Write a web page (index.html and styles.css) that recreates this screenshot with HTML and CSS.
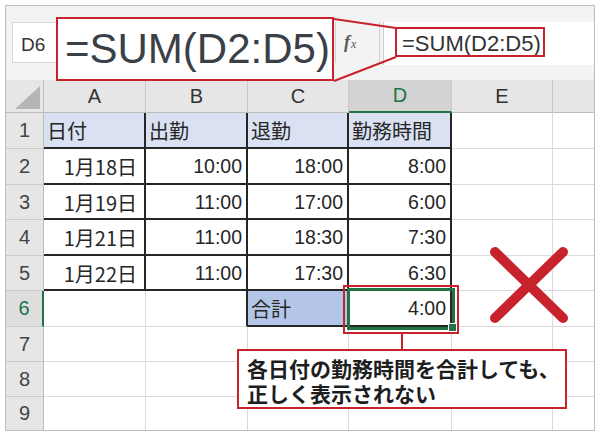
FILE: index.html
```html
<!DOCTYPE html>
<html lang="ja">
<head>
<meta charset="utf-8">
<link rel="stylesheet" href="styles.css">
</head>
<body>
<div class="sheet">
  <div class="fbar">
    <div class="namebox">D6</div>
    <div class="fx"><span class="f">f</span><span class="x">x</span></div>
    <div class="finput">=SUM(D2:D5)</div>
  </div>
  <div class="grid">
    <div class="corner"><svg width="38" height="33" viewBox="0 0 38 33"><polygon points="34,6 34,29 9,29" fill="#b5b5b5"/></svg></div>
    <div class="h">A</div><div class="h">B</div><div class="h">C</div><div class="h sel">D</div><div class="h">E</div><div class="h last"></div>

    <div class="rh">1</div>
    <div class="c t hd">日付</div><div class="c t hd">出勤</div><div class="c t hd">退勤</div><div class="c t hd">勤務時間</div><div class="c"></div><div class="c last"></div>

    <div class="rh">2</div>
    <div class="c t r date">1月18日</div><div class="c t r n">10:00</div><div class="c t r n">18:00</div><div class="c t r n">8:00</div><div class="c"></div><div class="c last"></div>

    <div class="rh">3</div>
    <div class="c t r date">1月19日</div><div class="c t r n">11:00</div><div class="c t r n">17:00</div><div class="c t r n">6:00</div><div class="c"></div><div class="c last"></div>

    <div class="rh">4</div>
    <div class="c t r date">1月21日</div><div class="c t r n">11:00</div><div class="c t r n">18:30</div><div class="c t r n">7:30</div><div class="c"></div><div class="c last"></div>

    <div class="rh">5</div>
    <div class="c t r date">1月22日</div><div class="c t r n">11:00</div><div class="c t r n">17:30</div><div class="c t r n">6:30</div><div class="c"></div><div class="c last"></div>

    <div class="rh sel">6</div>
    <div class="c"></div><div class="c edge"></div><div class="c t sum">合計</div><div class="c t r n">4:00</div><div class="c"></div><div class="c last"></div>

    <div class="rh">7</div>
    <div class="c"></div><div class="c"></div><div class="c"></div><div class="c"></div><div class="c"></div><div class="c last"></div>

    <div class="rh">8</div>
    <div class="c"></div><div class="c"></div><div class="c"></div><div class="c"></div><div class="c"></div><div class="c last"></div>

    <div class="rh end">9</div>
    <div class="c end"></div><div class="c end"></div><div class="c end"></div><div class="c end"></div><div class="c end"></div><div class="c last end"></div>
  </div>

  <div class="zoombox">=SUM(D2:D5)</div>
  <div class="minibox"></div>
  <div class="pick"></div>
  <div class="cursor"><span class="handle"></span></div>
  <svg class="ann" width="588" height="426" viewBox="0 0 588 426">
    <line x1="328" y1="13" x2="390" y2="22" stroke="#c8222c" stroke-width="2"/>
    <line x1="328" y1="75" x2="390" y2="51" stroke="#c8222c" stroke-width="2"/>
    <line x1="396" y1="328" x2="396" y2="344" stroke="#c8222c" stroke-width="2"/>
    <line x1="489" y1="246" x2="557" y2="312" stroke="#c8222c" stroke-width="10" stroke-linecap="round"/>
    <line x1="557" y1="246" x2="489" y2="312" stroke="#c8222c" stroke-width="10" stroke-linecap="round"/>
  </svg>
  <div class="note">各日付の勤務時間を合計しても、<br>正しく表示されない</div>
</div>
</body>
</html>
```

FILE: styles.css
```css
body {
  margin: 0;
  background: #ffffff;
  font-family: "Noto Sans CJK JP", sans-serif;
}

.sheet {
  position: relative;
  margin: 5px 0 0 5px;
  width: 590px;
  border: 1px solid #bdbdbd;
  background: #f3f3f3;
  box-sizing: border-box;
}

.fbar {
  height: 74px;
  display: flex;
  align-items: flex-start;
  padding: 16px 0 0 6px;
  box-sizing: border-box;
}

.namebox {
  width: 100px;
  height: 41px;
  background: #ffffff;
  border: 1px solid #d6d6d6;
  box-sizing: border-box;
  padding: 4px 0 0 8px;
  display: flex;
  align-items: center;
  font-family: "Liberation Sans", sans-serif;
  font-size: 19px;
  color: #333333;
}

.fx {
  margin-left: auto;
  width: 45px;
  height: 41px;
  border-left: 1px solid #d0d0d0;
  border-right: 1px solid #d0d0d0;
  box-sizing: border-box;
  display: flex;
  align-items: center;
  padding-left: 8px;
  font-family: "Liberation Serif", serif;
  font-style: italic;
  color: #5a5a5a;
}

.fx .f {
  font-size: 18px;
  font-weight: 700;
}

.fx .x {
  font-size: 12px;
  margin-left: 1px;
  margin-top: 4px;
}

.finput {
  margin-left: 3px;
  width: 211px;
  height: 43px;
  background: #ffffff;
  border-left: 1px solid #d0d0d0;
  box-sizing: border-box;
  padding-left: 18px;
  display: flex;
  align-items: center;
  font-family: "Liberation Sans", sans-serif;
  font-size: 22px;
  color: #333333;
}

.grid {
  display: grid;
  grid-template-columns: 38px 102px 102px 101px 103px 101px 41px;
  grid-template-rows: 33px 36px 36px 35px 36px 35px 36px 35px 35px 33px;
  background: #ffffff;
}

.corner {
  background: #e6e6e6;
  border-right: 1px solid #bcbcbc;
  border-bottom: 1px solid #bcbcbc;
  box-sizing: border-box;
}

.corner svg {
  display: block;
}

.h {
  background: #e6e6e6;
  border-right: 1px solid #c9c9c9;
  border-bottom: 1px solid #bcbcbc;
  box-sizing: border-box;
  display: flex;
  align-items: center;
  justify-content: center;
  font-family: "Liberation Sans", sans-serif;
  font-size: 20px;
  color: #333333;
}

.h.sel {
  background: #d3d3d3;
  color: #217346;
  border-bottom: 2px solid #217346;
}

.h.last {
  border-right: none;
}

.rh {
  background: #e6e6e6;
  border-right: 1px solid #bcbcbc;
  border-bottom: 1px solid #cacaca;
  box-sizing: border-box;
  display: flex;
  align-items: center;
  justify-content: center;
  font-family: "Liberation Sans", sans-serif;
  font-size: 20px;
  color: #444444;
}

.rh.sel {
  color: #217346;
  background: #dedede;
  border-right: 2px solid #217346;
}

.c {
  border-right: 1px solid #dadada;
  border-bottom: 1px solid #dadada;
  box-sizing: border-box;
  display: flex;
  align-items: center;
  padding: 1px 4px 0 3px;
  font-size: 20px;
  color: #262626;
  white-space: nowrap;
  overflow: hidden;
}

.c.last {
  border-right: none;
}

.end {
  border-bottom: none;
}

.c.r {
  justify-content: flex-end;
}

.c.n {
  font-family: "Liberation Sans", sans-serif;
  font-size: 19.5px;
}

.c.date {
  font-size: 20px;
  padding-right: 7px;
}

.c.t {
  border-right: 2px solid #262626;
  border-bottom: 2px solid #262626;
}

.c.edge {
  border-right: 2px solid #262626;
}

.c.hd {
  background: #d9e1f2;
}

.c.sum {
  background: #b4c6e7;
}

.zoombox {
  position: absolute;
  left: 50px;
  top: 11px;
  width: 278px;
  height: 64px;
  border: 2px solid #c8222c;
  background: #ffffff;
  box-sizing: border-box;
  padding-left: 7px;
  display: flex;
  align-items: center;
  font-family: "Liberation Sans", sans-serif;
  font-size: 42px;
  line-height: 1;
  color: #3a3f48;
}

.minibox {
  position: absolute;
  left: 389px;
  top: 21px;
  width: 150px;
  height: 30px;
  border: 2px solid #c8222c;
  box-sizing: border-box;
}

.pick {
  position: absolute;
  left: 337px;
  top: 279px;
  width: 116px;
  height: 49px;
  border: 2px solid #c8222c;
  box-sizing: border-box;
}

.cursor {
  position: absolute;
  left: 341px;
  top: 282px;
  width: 108px;
  height: 42px;
  border: 3px solid #217346;
  box-sizing: border-box;
}

.handle {
  position: absolute;
  right: -5px;
  bottom: -5px;
  width: 7px;
  height: 7px;
  background: #217346;
  border: 1px solid #ffffff;
}

.ann {
  position: absolute;
  left: 0;
  top: 0;
  pointer-events: none;
}

.note {
  position: absolute;
  left: 231px;
  top: 343px;
  width: 330px;
  height: 60px;
  border: 2px solid #c8222c;
  background: #ffffff;
  box-sizing: border-box;
  padding: 5px 0 0 8px;
  font-size: 21px;
  font-weight: 700;
  line-height: 25px;
  color: #1e1e1e;
  white-space: nowrap;
}
```
